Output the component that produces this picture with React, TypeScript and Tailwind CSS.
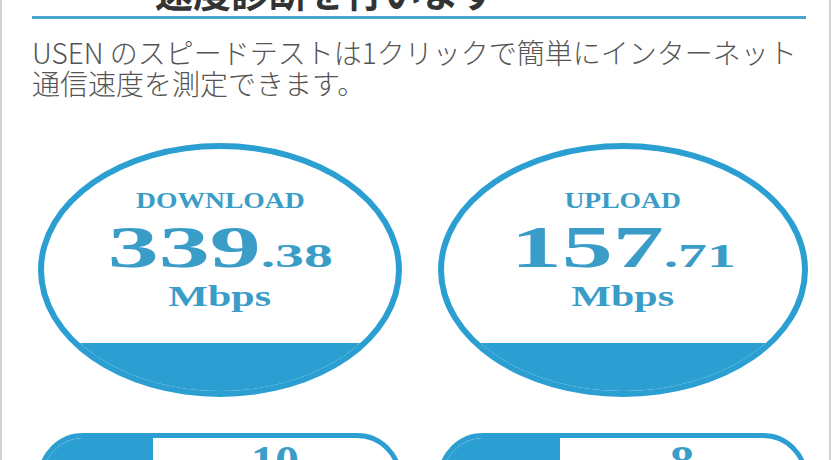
import React from "react";

const serif = { fontFamily: '"Liberation Serif", "Times New Roman", serif' };
const jp = { fontFamily: '"Noto Sans CJK JP", "Noto Sans", sans-serif' };

function Gauge({ w, label, int, dec }: { w: string; label: string; int: string; dec: string }) {
  return (
    <div
      className={`${w} h-[254px] shrink-0 rounded-[50%] border-[6px] border-[#2c9fd2] overflow-hidden flex flex-col items-center text-[#3a9dc8] font-bold`}
      style={serif}
    >
      <div className="shrink-0 pt-[39px] text-[24px] leading-[24px] scale-x-[1.15] whitespace-nowrap">{label}</div>
      <div className="shrink-0 mt-[5px] flex items-baseline scale-x-[1.7] whitespace-nowrap">
        <span className="text-[60px] leading-[60px]">{int}</span>
        <span className="text-[34px] leading-[34px]">.{dec}</span>
      </div>
      <div className="shrink-0 mt-[4px] text-[30px] leading-[30px] scale-x-[1.4]">Mbps</div>
      <div className="shrink-0 mt-auto h-[48px] w-full bg-[#2c9fd2]" />
    </div>
  );
}

function Pill({ w, left, value }: { w: string; left: string; value: string }) {
  return (
    <div className={`${w} h-[90px] shrink-0 rounded-[45px] border-[5px] border-[#2c9fd2] overflow-hidden flex`}>
      <div className={`${left} h-full bg-[#2c9fd2]`} />
      <div className="flex-1 flex justify-center">
        <div className="pt-[2px] text-[44px] leading-[44px] font-bold text-[#3a9dc8] scale-x-[1.1]" style={serif}>
          {value}
        </div>
      </div>
    </div>
  );
}

export default function App() {
  return (
    <div className="w-[840px] h-[460px] overflow-hidden bg-white" style={jp}>
      <div className="w-[831px] h-[460px] border-x-2 border-[#d2d2d2] flex flex-col">
        <div className="shrink-0 h-[16px] pl-[153px] flex items-end">
          <div className="shrink-0 h-[38px] mb-[6px] text-[38px] leading-[38px] font-bold text-[#333] whitespace-nowrap">
            速度診断を行います
          </div>
        </div>
        <div className="shrink-0 ml-[30px] w-[774px] h-[3px] bg-[#4aa6cc]" />
        <p className="shrink-0 ml-[30px] mt-[18px] text-[28px] leading-[31px] font-light text-[#555] whitespace-nowrap">
          USEN のスピードテストは1クリックで簡単にインターネット
          <br />
          通信速度を測定できます。
        </p>
        <div className="shrink-0 flex ml-[36px] gap-[36px] mt-[44px]">
          <Gauge w="w-[364px]" label="DOWNLOAD" int="339" dec="38" />
          <Gauge w="w-[370px]" label="UPLOAD" int="157" dec="71" />
        </div>
        <div className="shrink-0 flex ml-[36px] gap-[36px] mt-[36px]">
          <Pill w="w-[364px]" left="w-[110px]" value="10" />
          <Pill w="w-[370px]" left="w-[117px]" value="8" />
        </div>
      </div>
    </div>
  );
}
